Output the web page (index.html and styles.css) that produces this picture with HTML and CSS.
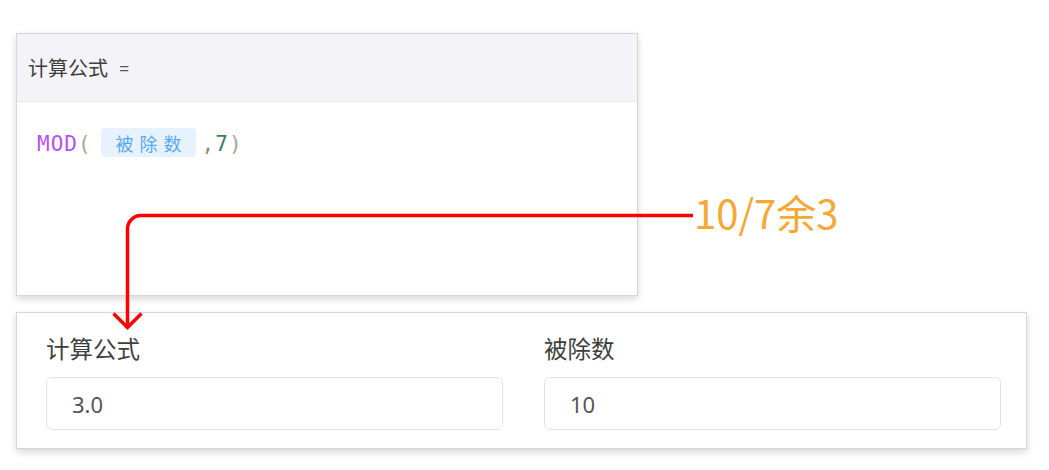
FILE: index.html
```html
<!DOCTYPE html>
<html lang="zh-CN">
<head>
<meta charset="utf-8">
<title>计算公式</title>
<link rel="stylesheet" href="styles.css">
</head>
<body>
<div class="page">
  <section class="formula-card">
    <header class="formula-head">计算公式<span class="eq">=</span></header>
    <div class="formula-body">
      <div class="formula-line">
        <span class="fn">MOD</span><span class="paren">(</span><span class="chip">被除数</span><span class="comma">,</span><span class="num">7</span><span class="paren">)</span>
      </div>
    </div>
  </section>

  <section class="form-card">
    <div class="field">
      <label class="field-label">计算公式</label>
      <div class="field-input">3.0</div>
    </div>
    <div class="field">
      <label class="field-label">被除数</label>
      <div class="field-input">10</div>
    </div>
  </section>

  <svg class="annot-arrow" width="1049" height="470" viewBox="0 0 1049 470" aria-hidden="true">
    <path d="M693 215.5 H141 A13.5 13.5 0 0 0 127.5 229 V326" fill="none" stroke="#ff0000" stroke-width="3.5"/>
    <path d="M113.5 313.5 L127.5 327.5 L141.5 313.5" fill="none" stroke="#ff0000" stroke-width="3.5"/>
  </svg>
  <div class="annot-text">10/7余3</div>
</div>
</body>
</html>
```
FILE: styles.css
```css
html, body {
  margin: 0;
  padding: 0;
  background: #ffffff;
}

body {
  font-family: "Noto Sans", "Noto Sans CJK SC", sans-serif;
  color: #333333;
}

.page {
  position: relative;
  width: 1049px;
  height: 470px;
  padding-top: 33px;
  box-sizing: border-box;
  overflow: hidden;
}

.formula-card {
  margin-left: 16px;
  width: 622px;
  height: 263px;
  box-sizing: border-box;
  border: 1px solid #d6d6d6;
  background: #ffffff;
  box-shadow: 0 3px 7px rgba(0, 0, 0, 0.16);
  display: flex;
  flex-direction: column;
}

.formula-head {
  height: 68px;
  box-sizing: border-box;
  border-bottom: 1px solid #e6e6ec;
  background: #f4f4f8;
  padding-left: 11px;
  display: flex;
  align-items: center;
  font-family: "Noto Sans CJK SC", sans-serif;
  font-size: 20px;
  color: #3e3e3e;
}

.formula-head .eq {
  margin-left: 11px;
  font-family: "Noto Sans", sans-serif;
  font-size: 18px;
  color: #555555;
}

.formula-body {
  flex: 1;
  padding: 26px 0 0 20px;
}

.formula-line {
  display: flex;
  align-items: center;
  height: 29px;
  font-family: "DejaVu Sans Mono", monospace;
  font-size: 21px;
  letter-spacing: 1px;
}

.formula-line .fn,
.formula-line .paren,
.formula-line .comma,
.formula-line .num {
  padding-top: 3px;
}

.fn { color: #b550f7; }
.paren { color: #aaa892; }
.comma { color: #8c8a7a; }
.num { color: #3b7d63; }

.chip {
  margin: 0 6px 0 9px;
  height: 29px;
  display: flex;
  align-items: center;
  padding: 0 8px 0 15px;
  border-radius: 4px;
  background: #e7f2ff;
  color: #5aa8f2;
  font-family: "Noto Sans CJK SC", sans-serif;
  font-size: 18px;
  letter-spacing: 6px;
}

.form-card {
  margin: 16px 0 0 16px;
  width: 1011px;
  height: 137px;
  box-sizing: border-box;
  border: 1px solid #d6d6d6;
  background: #ffffff;
  box-shadow: 0 3px 7px rgba(0, 0, 0, 0.16);
  padding: 20px 25px 0 29px;
  display: grid;
  grid-template-columns: 1fr 1fr;
  column-gap: 41px;
  align-items: start;
}

.field {
  display: flex;
  flex-direction: column;
  gap: 14px;
}

.field-label {
  font-family: "Noto Sans CJK SC", sans-serif;
  font-size: 23.5px;
  line-height: 30px;
  color: #3e3e3e;
}

.field-input {
  height: 53px;
  box-sizing: border-box;
  border: 1px solid #e2e2ea;
  border-radius: 6px;
  padding-left: 25px;
  display: flex;
  align-items: center;
  font-family: "Noto Sans", sans-serif;
  font-size: 22px;
  color: #555555;
}

.annot-arrow {
  position: absolute;
  left: 0;
  top: 0;
  z-index: 2;
  pointer-events: none;
}

.annot-text {
  position: absolute;
  left: 694px;
  top: 192px;
  z-index: 2;
  font-family: "Noto Sans CJK SC", sans-serif;
  font-size: 40px;
  line-height: 40px;
  color: #f5a833;
  white-space: nowrap;
}
```
